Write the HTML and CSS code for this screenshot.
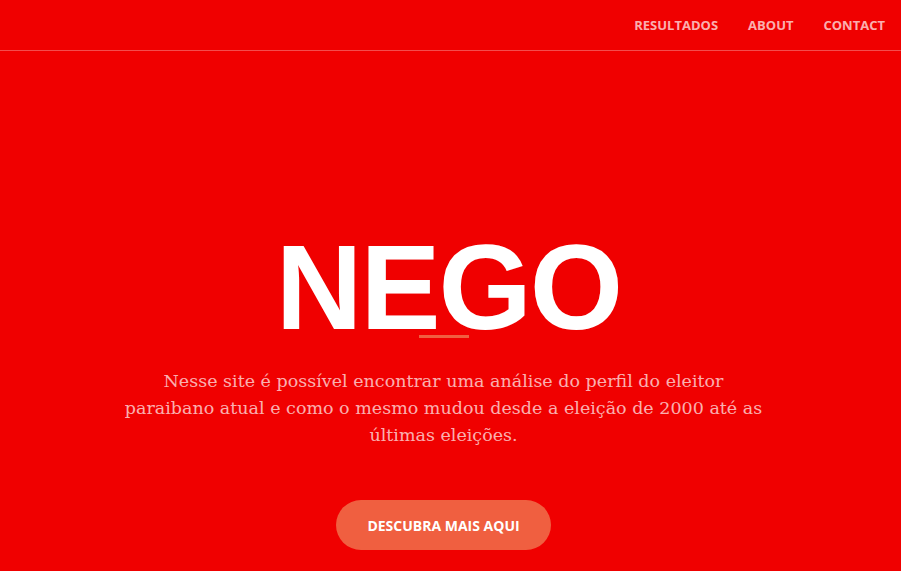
FILE: index.html
```html
<!DOCTYPE html>
<html lang="pt">
<head>
<meta charset="utf-8">
<title>NEGO</title>
<link rel="stylesheet" href="styles.css">
</head>
<body>
<nav class="navbar">
  <ul class="nav-links">
    <li><a href="#">Resultados</a></li>
    <li><a href="#">About</a></li>
    <li><a href="#">Contact</a></li>
  </ul>
</nav>
<header class="hero">
  <h1 class="title">NEGO</h1>
  <hr class="divider">
  <p class="lead">Nesse site é possível encontrar uma análise do perfil do eleitor paraibano atual e como o mesmo mudou desde a eleição de 2000 até as últimas eleições.</p>
  <a class="btn" href="#">Descubra mais aqui</a>
</header>
</body>
</html>
```
FILE: styles.css
```css
* { box-sizing: border-box; }
html, body { margin: 0; padding: 0; }
body {
  background: #f00000;
  height: 571px;
  overflow: hidden;
  font-family: "Open Sans", sans-serif;
}
.navbar {
  height: 51px;
  border-bottom: 1px solid rgba(255,255,255,0.3);
  display: flex;
  justify-content: flex-end;
  align-items: center;
  padding-right: 1px;
}
.nav-links {
  list-style: none;
  margin: 0;
  padding: 0 0 1px 0;
  display: flex;
}
.nav-links a {
  display: block;
  padding: 0 15px;
  color: rgba(255,255,255,0.7);
  text-decoration: none;
  text-transform: uppercase;
  font-weight: 700;
  font-size: 13px;
}
.hero {
  display: flex;
  flex-direction: column;
  align-items: center;
  text-align: center;
  padding-top: 176px;
  padding-right: 14px;
}
.title {
  margin: 0 0 0 10px;
  font-family: "Liberation Sans", Arial, sans-serif;
  font-weight: 700;
  font-size: 120px;
  line-height: 120px;
  letter-spacing: -2px;
  color: #fff;
}
.divider {
  width: 50px;
  height: 3px;
  border: 0;
  background: #f05f40;
  margin: -12px 0 0 0;
}
.lead {
  margin: 30px 0 0;
  max-width: 645px;
  font-family: "DejaVu Serif", serif;
  font-size: 17.5px;
  line-height: 27px;
  color: rgba(255,255,255,0.7);
}
.btn {
  margin-top: 51px;
  display: inline-flex;
  align-items: center;
  justify-content: center;
  width: 215px;
  height: 50px;
  border-radius: 300px;
  background: #f05f40;
  color: #fff;
  text-decoration: none;
  text-transform: uppercase;
  font-weight: 700;
  font-size: 14px;
}
```
